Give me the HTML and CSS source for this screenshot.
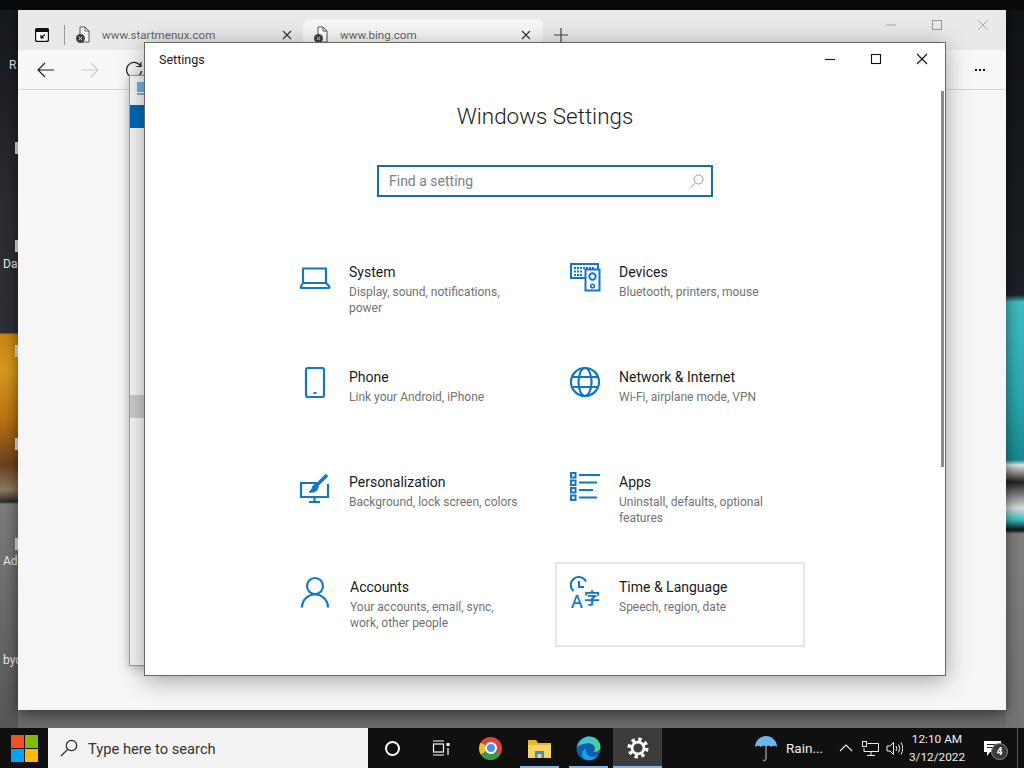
FILE: index.html
```html
<!DOCTYPE html>
<html lang="en">
<head>
  <meta charset="UTF-8" />
  <title>Windows Settings</title>
  <link rel="stylesheet" href="styles.css">
</head>
<body>
  <div class="desktop">
    <!-- desktop icon labels, mostly hidden behind the browser -->
    <span class="desk-label label-r">R</span>
    <span class="desk-label label-da">Da</span>
    <span class="desk-label label-ad">Ad</span>
    <span class="desk-label label-by">byc</span>

    <!-- browser window -->
    <div class="browser">
      <div class="tabstrip">
        <svg class="tab-actions" width="14" height="14" viewBox="0 0 14 14"><rect x="0.5" y="0.5" width="13" height="13" rx="2" fill="#fff" stroke="#111" stroke-width="1.4"/><path d="M1 1h12v3H1z" fill="#111"/><path d="M10 6.5L6 10M6 7v3h3" fill="none" stroke="#111" stroke-width="1.2"/></svg>
        <span class="tab-sep"></span>
        <div class="tab">
          <svg class="tab-icon" width="14" height="18" viewBox="0 0 14 18"><path d="M4 1h5l4 4v11H4z" fill="#fff" stroke="#555"/><path d="M9 1v4h4" fill="none" stroke="#555"/><circle cx="4.5" cy="12.5" r="4.5" fill="#444"/><path d="M3 11l3 3M6 11l-3 3" stroke="#ddd"/></svg>
          <span class="tab-title">www.startmenux.com</span>
          <svg class="tab-close" width="10" height="10" viewBox="0 0 10 10"><path d="M1 1l8 8M9 1l-8 8" stroke="#333" stroke-width="1.1"/></svg>
        </div>
        <div class="tab tab-active">
          <svg class="tab-icon" width="14" height="18" viewBox="0 0 14 18"><path d="M4 1h5l4 4v11H4z" fill="#fff" stroke="#555"/><path d="M9 1v4h4" fill="none" stroke="#555"/><circle cx="4.5" cy="12.5" r="4.5" fill="#444"/><path d="M3 11l3 3M6 11l-3 3" stroke="#ddd"/></svg>
          <span class="tab-title">www.bing.com</span>
          <svg class="tab-close" width="10" height="10" viewBox="0 0 10 10"><path d="M1 1l8 8M9 1l-8 8" stroke="#333" stroke-width="1.1"/></svg>
        </div>
        <svg class="tab-new" width="14" height="14" viewBox="0 0 14 14"><path d="M7 0v14M0 7h14" stroke="#444" stroke-width="1.2"/></svg>
        <div class="browser-controls">
          <span class="control"><svg width="12" height="12" viewBox="0 0 12 12"><path d="M1 6h10" stroke="#aaa"/></svg></span>
          <span class="control"><svg width="12" height="12" viewBox="0 0 12 12"><rect x="1.5" y="1.5" width="9" height="9" fill="none" stroke="#999"/></svg></span>
          <span class="control"><svg width="12" height="12" viewBox="0 0 12 12"><path d="M1 1l10 10M11 1L1 11" stroke="#aaa"/></svg></span>
        </div>
      </div>
      <div class="toolbar">
        <svg class="nav-btn" width="18" height="16" viewBox="0 0 18 16"><path d="M17 8H1M8 1L1 8l7 7" fill="none" stroke="#222" stroke-width="1.2"/></svg>
        <svg class="nav-btn" width="18" height="16" viewBox="0 0 18 16"><path d="M1 8h16M10 1l7 7-7 7" fill="none" stroke="#ccc" stroke-width="1.2"/></svg>
        <svg class="nav-btn" width="18" height="18" viewBox="0 0 18 18"><path d="M15.5 5A7.5 7.5 0 1 0 16.5 10M16 1v4.5h-4.5" fill="none" stroke="#222" stroke-width="1.2"/></svg>
        <span class="toolbar-more"><i></i><i></i><i></i></span>
      </div>
    </div>

    <!-- second settings window behind the front one -->
    <div class="back-window">
      <svg class="back-icon" width="12" height="14" viewBox="0 0 12 14"><rect x="0" y="0" width="12" height="10" fill="#6fb2e6"/><path d="M0 12h12" stroke="#9ab" stroke-width="2"/></svg>
      <div class="back-bar"></div>
      <div class="back-item"></div>
    </div>

    <!-- settings window -->
    <div class="settings">
      <div class="titlebar">
        <span class="titlebar-name">Settings</span>
        <div class="window-controls">
          <span class="control"><svg width="12" height="12" viewBox="0 0 12 12"><path d="M1 6.5h10" stroke="#111" stroke-width="1.1"/></svg></span>
          <span class="control"><svg width="12" height="12" viewBox="0 0 12 12"><rect x="1.5" y="1.5" width="9" height="9" fill="none" stroke="#111" stroke-width="1.1"/></svg></span>
          <span class="control"><svg width="12" height="12" viewBox="0 0 12 12"><path d="M1 1l10 10M11 1L1 11" stroke="#111" stroke-width="1.1"/></svg></span>
        </div>
      </div>
      <h1 class="page-title">Windows Settings</h1>
      <div class="search-box">
        <span>Find a setting</span>
        <svg width="14" height="14" viewBox="0 0 14 14"><circle cx="8.5" cy="5.5" r="4.5" fill="none" stroke="#999"/><path d="M5.2 8.8L.7 13.3" stroke="#999"/></svg>
      </div>
      <div class="tile-grid">
        <div class="tile">
          <svg class="tile-icon" viewBox="0 0 32 36"><path d="M3 21V6.500h23v14.500M3 21L.8 24.500q-.3 1.500 1 1.500h26.500q1.300 0 1-1.500L26 21z" fill="none" stroke="#1277c4" stroke-width="2.200" stroke-linejoin="round"/></svg>
          <div class="tile-text"><div class="tile-name">System</div><div class="tile-desc">Display, sound, notifications, power</div></div>
        </div>
        <div class="tile">
          <svg class="tile-icon" viewBox="0 0 32 36"><rect x="1" y="2" width="27" height="14" fill="none" stroke="#1277c4" stroke-width="2"/><path d="M4 6h20M4 9.500h9M4 13h9" stroke="#1277c4" stroke-width="2" stroke-dasharray="2 1"/><rect x="15.500" y="7.500" width="14" height="21" fill="#fff" stroke="#1277c4" stroke-width="2"/><circle cx="22.500" cy="14.500" r="3.200" fill="none" stroke="#1277c4" stroke-width="2"/><circle cx="22.500" cy="24" r="1.800" fill="none" stroke="#1277c4" stroke-width="1.600"/></svg>
          <div class="tile-text"><div class="tile-name">Devices</div><div class="tile-desc">Bluetooth, printers, mouse</div></div>
        </div>
        <div class="tile">
          <svg class="tile-icon" viewBox="0 0 32 36"><rect x="6" y="1" width="18" height="29" rx="2" fill="none" stroke="#1277c4" stroke-width="2.200"/><path d="M13.500 26h3" stroke="#1277c4" stroke-width="2"/></svg>
          <div class="tile-text"><div class="tile-name">Phone</div><div class="tile-desc">Link your Android, iPhone</div></div>
        </div>
        <div class="tile">
          <svg class="tile-icon" viewBox="0 0 32 36"><g fill="none" stroke="#1277c4" stroke-width="2.200"><circle cx="15" cy="15" r="14"/><ellipse cx="15" cy="15" rx="6.500" ry="14"/><path d="M2.500 10h25M2.500 20h25"/></g></svg>
          <div class="tile-text"><div class="tile-name">Network &amp; Internet</div><div class="tile-desc">Wi-Fi, airplane mode, VPN</div></div>
        </div>
        <div class="tile">
          <svg class="tile-icon" viewBox="0 0 32 36"><g fill="none" stroke="#1277c4" stroke-width="2.200"><path d="M18 11H1v14h27V12"/><path d="M14.500 25v4M9 30h11"/><path d="M27 3L17 13" stroke-width="3.500"/><path d="M18 12q-6 0-6 5l-3 3q6 1 8-2 2-3 1-6z" fill="#1277c4" stroke-width="1"/></g></svg>
          <div class="tile-text"><div class="tile-name">Personalization</div><div class="tile-desc">Background, lock screen, colors</div></div>
        </div>
        <div class="tile">
          <svg class="tile-icon" viewBox="0 0 32 36"><g fill="none" stroke="#1277c4"><path d="M9 3h21M9 10.500h18M9 18h14M9 25.500h18" stroke-width="2"/><rect x="1" y="1" width="4.500" height="4.500" stroke-width="2"/><rect x="1" y="8.500" width="4.500" height="4.500" stroke-width="2"/><rect x="1" y="16" width="4.500" height="4.500" stroke-width="2"/><rect x="1" y="23.500" width="4.500" height="4.500" stroke-width="2"/></g></svg>
          <div class="tile-text"><div class="tile-name">Apps</div><div class="tile-desc">Uninstall, defaults, optional features</div></div>
        </div>
        <div class="tile">
          <svg class="tile-icon" viewBox="0 0 32 36"><g fill="none" stroke="#1277c4" stroke-width="2.200"><circle cx="15" cy="9" r="8"/><path d="M2 30.500a13 13 0 0 1 26 0"/></g></svg>
          <div class="tile-text tile-text-accounts"><div class="tile-name">Accounts</div><div class="tile-desc">Your accounts, email, sync, work, other people</div></div>
        </div>
        <div class="tile tile-focus">
          <svg class="tile-icon" viewBox="0 0 32 36"><g fill="none" stroke="#1277c4" stroke-width="2"><path d="M3.500 14A8 8 0 1 1 16 4.500"/><path d="M9 4v6h5"/></g><text class="icon-latin" x="1" y="31">A</text><text class="icon-cjk" x="14" y="27">字</text></svg>
          <div class="tile-text"><div class="tile-name">Time &amp; Language</div><div class="tile-desc">Speech, region, date</div></div>
        </div>
      </div>
      <div class="scroll-thumb"></div>
    </div>

    <!-- taskbar -->
    <div class="taskbar">
      <div class="start"><div class="win-logo"><i class="red"></i><i class="green"></i><i class="blue"></i><i class="yellow"></i></div></div>
      <div class="task-search">
        <svg width="18" height="18" viewBox="0 0 18 18"><circle cx="11.500" cy="6.500" r="5.200" fill="none" stroke="#222" stroke-width="1.200"/><path d="M7.700 10.300L1 17" stroke="#222" stroke-width="1.200"/></svg>
        <span class="task-search-text">Type here to search</span>
      </div>
      <div class="task-btn btn-cortana"><span class="cortana"></span></div>
      <div class="task-btn btn-view">
        <svg width="18" height="16" viewBox="0 0 18 16"><g fill="none" stroke="#fff" stroke-width="1.200"><path d="M1 1h11M1 15h11"/><rect x="1.500" y="4" width="10" height="8"/><path d="M16 8v7"/></g><rect x="14.500" y="3" width="3" height="3" fill="#fff"/></svg>
      </div>
      <div class="task-btn"><span class="chrome"><span class="chrome-dot"></span></span></div>
      <div class="task-btn task-open">
        <svg width="23" height="19" viewBox="0 0 23 19"><path d="M0 1h8l2 3h13v15H0z" fill="#e8b731"/><path d="M0 6h23v13H0z" fill="#f6d565"/><path d="M7 12h9v7H7z" fill="#3b8fd0"/><path d="M9.500 15h4v4h-4z" fill="#f6d565"/></svg>
      </div>
      <div class="task-btn task-open">
        <svg width="25" height="25" viewBox="0 0 25 25"><defs><linearGradient id="edgeTop" x1="0" y1="0" x2="1" y2="1"><stop offset="0" stop-color="#35c1f1"/><stop offset="1" stop-color="#59d36a"/></linearGradient></defs><circle cx="12.500" cy="12.500" r="12" fill="#0f5fb0"/><path d="M1 11C3 3 10 .5 13 .5c7 0 11.500 5 11.500 10.500 0 4-4 5.500-7 4.500 1.500-1 2-3 1-5-1.500-3-5-4-8.500-3C6 8 3 9 1 11z" fill="url(#edgeTop)"/><path d="M10 13c-1 4 2 8 7 8 2 0 3.500-.7 5-2-2 3.500-6 5.500-10 5-4-.5-6-3-6-6 0-3 2-5 4-5z" fill="#1aa0e8"/></svg>
      </div>
      <div class="task-btn task-active task-open">
        <svg width="22" height="22" viewBox="0 0 24 24"><circle cx="12" cy="12" r="9.500" fill="none" stroke="#fff" stroke-width="4" stroke-dasharray="3.700 3.760"/><circle cx="12" cy="12" r="6.500" fill="none" stroke="#fff" stroke-width="3"/></svg>
      </div>
      <div class="tray">
        <div class="tray-weather">
          <svg width="24" height="28" viewBox="0 0 24 28"><path d="M1 13a11 11 0 0 1 22 0q-3.500-2.500-5.500 0-3-2.500-5.500 0-2.500-2.500-5.500 0-2-2.500-5.500 0z" fill="#6cb4ec"/><path d="M12 13v11q0 3-3 2.500" fill="none" stroke="#8a8a8a" stroke-width="1.500"/></svg>
          <span>Rain...</span>
        </div>
        <div class="tray-icon"><svg width="14" height="8" viewBox="0 0 14 8"><path d="M1 7l6-6 6 6" fill="none" stroke="#eee" stroke-width="1.100"/></svg></div>
        <div class="tray-icon"><svg width="17" height="15" viewBox="0 0 17 15"><g fill="none" stroke="#eee"><path d="M5.500 2.500H16.500V10.500H2V7"/><path d="M9 11v3M5 14.500h8"/><rect x="0.500" y="0.500" width="4" height="5"/></g></svg></div>
        <div class="tray-icon"><svg width="17" height="15" viewBox="0 0 17 15"><g fill="none" stroke="#eee"><path d="M1 5h3l3.500-3.500v12L4 10H1z"/><path d="M10 5q1.500 2.500 0 5M12.500 3.500q2.500 4 0 8M15 1.500q3.500 6 0 12"/></g></svg></div>
        <div class="tray-clock"><div>12:10 AM</div><div>3/12/2022</div></div>
        <div class="tray-notify">
          <svg width="17" height="15" viewBox="0 0 17 15"><path d="M0 0h17v11H6l-3 4v-4H0z" fill="#fff"/><path d="M3 3.500h11M3 6.500h11" stroke="#222"/></svg>
          <span class="notify-count">4</span>
        </div>
        <div class="show-desktop"></div>
      </div>
    </div>
  </div>
</body>
</html>
```

FILE: styles.css
```css
body {
  margin: 0;
  font-family: Roboto, 'Noto Sans', sans-serif;
  color: #1a1a1a;
  overflow: hidden;
}

.desktop {
  position: relative;
  width: 1024px;
  height: 768px;
  overflow: hidden;
  background:
    linear-gradient(#e6e6e6, #e6e6e6) 15px 142px / 3px 12px no-repeat,
    linear-gradient(#e6e6e6, #e6e6e6) 15px 240px / 3px 12px no-repeat,
    linear-gradient(#e6e6e6, #e6e6e6) 15px 345px / 3px 12px no-repeat,
    linear-gradient(#e6e6e6, #e6e6e6) 15px 438px / 3px 12px no-repeat,
    linear-gradient(#e6e6e6, #e6e6e6) 15px 538px / 3px 12px no-repeat,
    linear-gradient(to bottom, #14171c 0, #2b2d34 210px, #2e3037 333px, #c98510 334px, #d89a20 370px, #b9720f 420px, #6d3f24 465px, #8c7a5c 490px, #2a2a2a 502px, #7c7c7c 504px, #565656 728px) 0 0 / 18px 728px no-repeat,
    linear-gradient(to bottom, #0f1216 0, #1c2027 295px, #42bcc2 302px, #2aa6ad 400px, #17898f 460px, #e4e4e4 465px, #222 482px, #dcdcdc 508px, #37bfc0 520px, #111 530px, #7f7f7f 534px, #747474 728px) 100% 0 / 18px 728px no-repeat,
    linear-gradient(to bottom, #777 0, #6c6c6c 100%);
}

.desk-label {
  position: absolute;
  left: 3px;
  color: #eee;
  font-size: 12px;
  line-height: 16px;
}
.label-r { top: 57px; left: 9px; }
.label-da { top: 256px; }
.label-ad { top: 553px; }
.label-by { top: 652px; }

.browser {
  position: absolute;
  left: 18px;
  top: 10px;
  width: 988px;
  height: 700px;
  background: #f6f6f6;
  box-shadow: 0 4px 14px rgba(0, 0, 0, 0.55);
}

.desktop::before {
  content: '';
  position: absolute;
  left: 0;
  right: 0;
  top: 0;
  height: 10px;
  background: #0a0a0a;
}

.tabstrip {
  display: flex;
  align-items: flex-end;
  height: 40px;
  background: #e9e9e9;
}

.tab-actions {
  margin: 0 0 8px 17px;
}

.tab-sep {
  width: 1px;
  height: 20px;
  margin: 0 5px 5px 15px;
  background: #9a9a9a;
}

.tab {
  display: flex;
  align-items: center;
  width: 233px;
  height: 31px;
  padding: 0 11px 0 6px;
  box-sizing: border-box;
  font-size: 11.6px;
  color: #666;
}

.tab-active {
  width: 240px;
  padding: 0 12px 0 11px;
  background: #f6f6f6;
  border-radius: 6px 6px 0 0;
}

.tab-icon {
  flex: none;
  margin-right: 12px;
}
.tab-active .tab-icon {
  margin-right: 12px;
}

.tab-title {
  flex: 1;
}

.tab-new {
  margin: 0 0 8px 11px;
}

.browser-controls {
  display: flex;
  margin-left: auto;
  align-self: stretch;
}

.control {
  display: flex;
  align-items: center;
  justify-content: center;
  width: 46px;
}

.browser-controls .control {
  height: 30px;
}

.toolbar {
  display: flex;
  align-items: center;
  gap: 26px;
  height: 39px;
  padding-left: 19px;
  border-bottom: 1px solid #d6d6d6;
  background: #f7f7f7;
}

.toolbar-more {
  display: flex;
  gap: 2px;
  margin-left: auto;
  margin-right: 21px;
}
.toolbar-more i {
  width: 2px;
  height: 2px;
  background: #111;
}

.back-window {
  position: absolute;
  left: 129px;
  top: 75px;
  width: 60px;
  height: 591px;
  box-sizing: border-box;
  padding-top: 6px;
  border: 1px solid #9a9a9a;
  background: #f7f7f7;
  box-shadow: 0 2px 10px rgba(0, 0, 0, 0.25);
}

.back-icon {
  display: block;
  margin-left: 7px;
}

.back-bar {
  height: 23px;
  margin-top: 9px;
  background: #0067b8;
}

.back-item {
  height: 23px;
  margin-top: 267px;
  background: #cdcdcd;
}

.settings {
  position: absolute;
  left: 144px;
  top: 42px;
  width: 802px;
  height: 634px;
  box-sizing: border-box;
  border: 1px solid #666;
  background: #fff;
  box-shadow: 0 4px 22px rgba(0, 0, 0, 0.35);
}

.titlebar {
  display: flex;
  align-items: center;
  height: 32px;
}

.titlebar-name {
  margin-left: 14px;
  font-size: 12.5px;
}

.window-controls {
  display: flex;
  margin-left: auto;
}

.page-title {
  margin: 24px 0 0;
  height: 33px;
  font-size: 22.4px;
  font-weight: 300;
  line-height: 35px;
  text-align: center;
  color: #222;
}

.search-box {
  display: flex;
  align-items: center;
  justify-content: space-between;
  width: 336px;
  height: 32px;
  margin: 33px auto 0;
  padding: 0 7px 0 10px;
  box-sizing: border-box;
  border: 2px solid #1a6e99;
  font-size: 14px;
  color: #808080;
}

.tile-grid {
  display: grid;
  grid-template-columns: 250px 250px;
  grid-auto-rows: 85px;
  gap: 20px;
  justify-content: center;
  margin-top: 50px;
}

.tile {
  display: flex;
  gap: 17px;
  padding: 13px 13px 0;
  border: 2px solid transparent;
}

.tile-focus {
  border-color: #e6e6e6;
}

.tile-icon {
  flex: none;
  width: 32px;
  height: 36px;
  overflow: visible;
}

.icon-latin {
  font-family: 'Noto Sans', sans-serif;
  font-size: 18px;
  font-weight: 500;
  fill: #1277c4;
}

.icon-cjk {
  font-family: 'Noto Sans CJK SC', sans-serif;
  font-size: 16px;
  font-weight: 700;
  fill: #1277c4;
}

.tile-text-accounts {
  margin-left: 1px;
}

.tile-name {
  font-size: 14px;
  line-height: 20px;
}

.tile-desc {
  margin-top: 2px;
  font-size: 12px;
  line-height: 16px;
  color: #727272;
}

.scroll-thumb {
  position: absolute;
  right: 1px;
  top: 48px;
  width: 3px;
  height: 376px;
  background: #8c8c8c;
}

.taskbar {
  position: absolute;
  left: 0;
  right: 0;
  bottom: 0;
  display: flex;
  height: 40px;
  background: #101010;
}

.start {
  display: flex;
  align-items: center;
  justify-content: center;
  width: 48px;
}

.win-logo {
  display: grid;
  grid-template-columns: 13px 13px;
  grid-auto-rows: 13px;
  gap: 1px;
}
.win-logo .red { background: #f25022; }
.win-logo .green { background: #7fba00; }
.win-logo .blue { background: #00a4ef; }
.win-logo .yellow { background: #ffb900; }

.task-search {
  display: flex;
  align-items: center;
  gap: 10px;
  width: 320px;
  padding-left: 12px;
  box-sizing: border-box;
  background: #f2f2f2;
  font-size: 14.7px;
  color: #333;
}

.task-search-text {
  padding-top: 2px;
}

.task-btn {
  position: relative;
  display: flex;
  align-items: center;
  justify-content: center;
  width: 49px;
}

.btn-cortana { width: 48px; }
.btn-view { width: 50px; }

.cortana {
  width: 11px;
  height: 11px;
  border: 2px solid #fff;
  border-radius: 50%;
}

.chrome {
  display: flex;
  align-items: center;
  justify-content: center;
  width: 23px;
  height: 23px;
  border-radius: 50%;
  background: conic-gradient(#d9463a 0 120deg, #3a9a4a 120deg 240deg, #f2c230 240deg 300deg, #d9463a 300deg);
}

.chrome-dot {
  width: 8px;
  height: 8px;
  border: 2px solid #fff;
  border-radius: 50%;
  background: #4f8ff0;
}

.task-open::after {
  content: '';
  position: absolute;
  left: 5px;
  right: 5px;
  bottom: 0;
  height: 2px;
  background: #7ab8e4;
}

.task-active {
  background: #3c3c3c;
}
.task-active::after {
  left: 0;
  right: 0;
}

.tray {
  display: flex;
  align-items: center;
  margin-left: auto;
  height: 100%;
  color: #eee;
}

.tray-weather {
  display: flex;
  align-items: center;
  gap: 8px;
  width: 80px;
  font-size: 13.5px;
}

.tray-icon {
  display: flex;
  justify-content: center;
  width: 24px;
}

.tray-clock {
  width: 62px;
  font-size: 11.8px;
  line-height: 18px;
  text-align: center;
}

.tray-notify {
  position: relative;
  display: flex;
  justify-content: center;
  width: 48px;
}

.notify-count {
  position: absolute;
  left: 23px;
  top: 2px;
  width: 15px;
  height: 15px;
  border: 1px solid #888;
  border-radius: 50%;
  background: #3a3a3a;
  color: #fff;
  font-size: 10px;
  font-weight: 700;
  line-height: 15px;
  text-align: center;
}

.show-desktop {
  width: 6px;
  height: 100%;
  margin-left: 1px;
  border-left: 1px solid #555;
}
```
